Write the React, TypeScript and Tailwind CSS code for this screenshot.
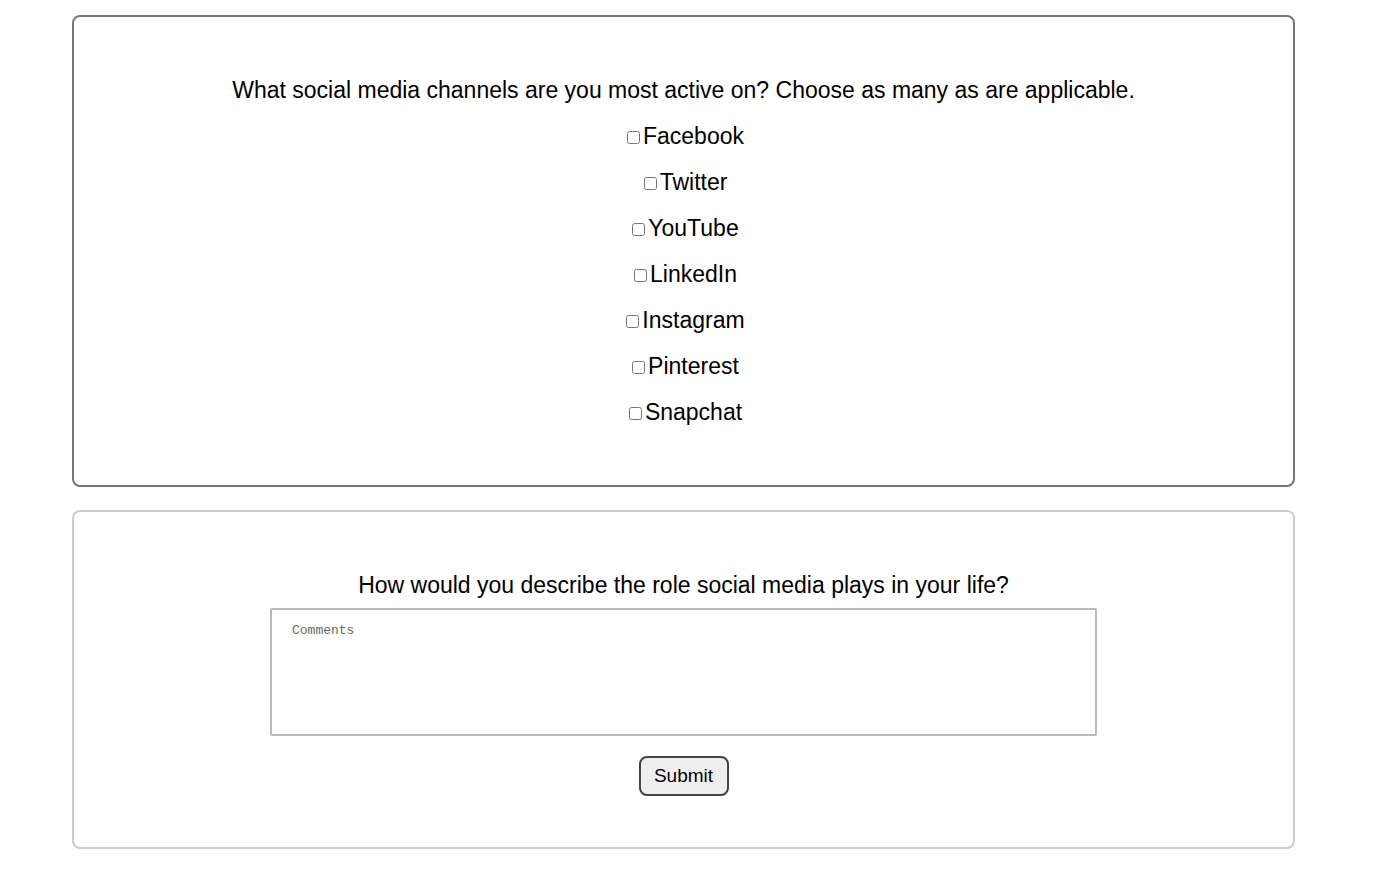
import { useState } from 'react';

const channels = ['Facebook', 'Twitter', 'YouTube', 'LinkedIn', 'Instagram', 'Pinterest', 'Snapchat'];

export default function App() {
  const [checked, setChecked] = useState<string[]>([]);
  const [comments, setComments] = useState('');

  const toggle = (name: string) => {
    setChecked((prev) => (prev.includes(name) ? prev.filter((c) => c !== name) : [...prev, name]));
  };

  return (
    <div className="min-h-screen bg-white text-black font-['Liberation_Sans',Arial,sans-serif] pt-[15px] pb-[23px]">
      {/* Channels */}
      <div className="ml-[72px] w-[1223px] h-[472px] border-2 border-[#777] rounded-lg flex flex-col items-center pt-[60px]">
        <p className="text-[23px] leading-[27px]">
          What social media channels are you most active on? Choose as many as are applicable.
        </p>
        <div className="flex flex-col items-center gap-[20px] mt-[19px]">
          {channels.map((c) => (
            <label key={c} className="flex items-center text-[23px] leading-[26px]">
              <input
                type="checkbox"
                checked={checked.includes(c)}
                onChange={() => toggle(c)}
                className="w-[13px] h-[13px] ml-[4px] mr-[3px] mt-[2px]"
              />
              {c}
            </label>
          ))}
        </div>
      </div>

      {/* Comments */}
      <div className="ml-[72px] mt-[23px] w-[1223px] h-[339px] border-2 border-[#ccc] rounded-lg flex flex-col items-center pt-[60px]">
        <p className="text-[23px] leading-[27px]">How would you describe the role social media plays in your life?</p>
        <textarea
          value={comments}
          onChange={(e) => setComments(e.target.value)}
          placeholder="Comments"
          className="mt-[9px] w-[827px] h-[128px] border-2 border-[#bbb] rounded-[2px] px-[20px] pt-[11px] text-[13px] font-['Liberation_Mono',monospace] placeholder:text-[#666] resize-none outline-none"
        />
        <button className="mt-[20px] w-[90px] h-[40px] border-2 border-[#444] rounded-lg bg-[#eee] text-[19px]">
          Submit
        </button>
      </div>
    </div>
  );
}
